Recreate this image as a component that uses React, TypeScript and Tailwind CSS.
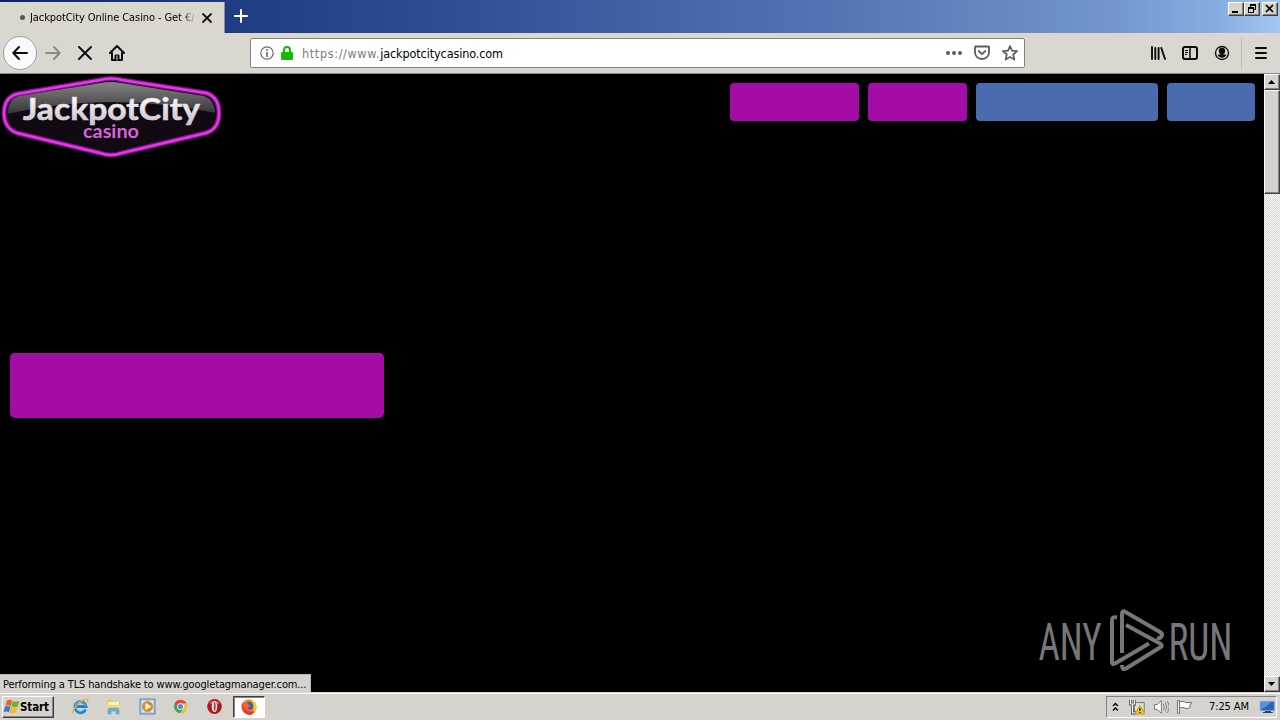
import type { ReactNode } from 'react';

const UI_FONT = "font-['DejaVu_Sans_Condensed','DejaVu_Sans',sans-serif] [font-stretch:condensed]";
const RAISED =
  'bg-[#d6d3ce] border border-t-white border-l-white border-r-[#404040] border-b-[#404040] shadow-[inset_-1px_-1px_0_#848284]';

function CaptionButton({ children, className = '' }: { children: ReactNode; className?: string }) {
  return (
    <button className={`flex h-[14px] w-4 items-center justify-center ${RAISED} ${className}`}>
      {children}
    </button>
  );
}

function TitleBar() {
  return (
    <header className="flex h-[33px] shrink-0 bg-[linear-gradient(90deg,#0a246a_0px,#1f3c82_225px,#2c4c93_430px,#5576b5_850px,#7094cb_1100px,#86ace0_1215px,#a3c8f2_1280px)]">
      <div className="mt-[2px] flex h-[31px] w-[225px] items-center border-r border-[#8a8f9b] bg-[#dad7d1] pl-[20px]">
        <span className="size-[5px] rounded-full bg-[#555555]" />
        <span className="ml-[5px] w-[164px] overflow-hidden text-[11px] leading-[16px] tracking-[-0.09px] whitespace-nowrap text-black [mask-image:linear-gradient(90deg,#000_150px,transparent_168px)]">
          JackpotCity Online Casino - Get €/
        </span>
        <svg className="ml-[7px]" width="12" height="12" viewBox="0 0 12 12" stroke="#111" strokeWidth="1.800" strokeLinecap="round">
          <path d="M2 2l8 8M10 2l-8 8" />
        </svg>
      </div>
      <svg className="mt-[8px] ml-[8px]" width="16" height="16" viewBox="0 0 16 16" stroke="#fff" strokeWidth="2" strokeLinecap="round">
        <path d="M8 2v12M2 8h12" />
      </svg>
      <div className="ml-auto flex pt-[2px] pr-[2px]">
        <CaptionButton>
          <svg width="12" height="10" viewBox="0 0 12 10"><path d="M2 7h6v2H2z" /></svg>
        </CaptionButton>
        <CaptionButton>
          <svg className="shrink-0" width="12" height="10" viewBox="0 0 12 10">
            <path fillRule="evenodd" d="M4 0h6v6H8V5h1V2H5v1H4zM2 3h6v6H2zM3 5v3h4V5z" />
          </svg>
        </CaptionButton>
        <CaptionButton className="ml-[2px]">
          <svg width="12" height="10" viewBox="0 0 12 10" stroke="#000" strokeWidth="1.600"><path d="M2 1l7 7M9 1L2 8" /></svg>
        </CaptionButton>
      </div>
    </header>
  );
}

function ToolBar() {
  return (
    <nav className="flex h-[41px] shrink-0 items-center border-b border-[#8f8c87] bg-[#dad7d1] pl-[3px]">
      <div className="flex size-[34px] items-center justify-center rounded-full border border-[#a09e9a] bg-[#fafafa]">
        <svg width="16" height="16" viewBox="0 0 16 16" fill="none" stroke="#0c0c0d" strokeWidth="2" strokeLinecap="round" strokeLinejoin="round">
          <path d="M15 8H1.500M7 2L1.300 8L7 14" />
        </svg>
      </div>
      <svg className="ml-[8px]" width="16" height="16" viewBox="0 0 16 16" fill="none" stroke="#8d8b88" strokeWidth="2" strokeLinecap="round" strokeLinejoin="round">
        <path d="M1 8h13.500M9 2l5.700 6L9 14" />
      </svg>
      <svg className="ml-[16px]" width="16" height="16" viewBox="0 0 16 16" stroke="#0c0c0d" strokeWidth="2" strokeLinecap="round">
        <path d="M2 2l12 12M14 2L2 14" />
      </svg>
      <svg className="ml-[16px]" width="16" height="16" viewBox="0 0 16 16" fill="none" stroke="#0c0c0d" strokeWidth="2" strokeLinecap="round" strokeLinejoin="round">
        <path d="M1 8l7-7 7 7M3 8v7h10V8" />
        <path d="M6 15v-5h4v5" fill="#0c0c0d" strokeWidth="1" />
        <path d="M8 11v4" stroke="#dad7d1" strokeWidth="1" />
      </svg>

      <div className="ml-[125px] flex h-[30px] w-[775px] items-center rounded-[2px] border border-[#85837f] bg-white pl-[9px]">
        <svg width="14" height="14" viewBox="0 0 14 14" fill="none" stroke="#6b6b6d" strokeWidth="1.200">
          <circle cx="7" cy="7" r="6.200" />
          <path d="M7 6v5M7 3v1.700" strokeWidth="1.700" />
        </svg>
        <svg className="ml-[7px]" width="12" height="14" viewBox="0 0 12 14">
          <path d="M3 7V4a3 3 0 0 1 6 0v3" fill="none" stroke="#12bc00" strokeWidth="2" />
          <rect y="6" width="12" height="8" rx="1" fill="#12bc00" />
        </svg>
        <span className="ml-[9px] pt-[2px] text-[12.500px] leading-[18px] whitespace-nowrap text-[#7d7d7d]">
          <span className="tracking-[0.65px]">https://www.</span>
          <span className="tracking-[-0.1px] text-black">jackpotcitycasino.com</span>
        </span>
        <div className="ml-auto flex items-center gap-[12px] pr-[6px]">
          <svg width="16" height="16" viewBox="0 0 16 16" fill="#5c5c5e"><circle cx="2" cy="8" r="2" /><circle cx="8" cy="8" r="2" /><circle cx="14" cy="8" r="2" /></svg>
          <svg width="16" height="16" viewBox="0 0 16 16" fill="none" stroke="#5c5c5e" strokeWidth="1.800" strokeLinecap="round" strokeLinejoin="round">
            <path d="M1.500 1.500h13q.500 0 .500.500V7.500a7 6.500 0 0 1-14 0V2q0-.500.500-.500zM4.700 6L8 9.100l3.300-3.100" />
          </svg>
          <svg width="16" height="16" viewBox="0 0 16 16" fill="none" stroke="#5c5c5e" strokeWidth="1.700" strokeLinejoin="round">
            <path d="M8 1l2 4.700 5.100.400-3.900 3.400 1.200 5.100L8 11.900l-4.400 2.700 1.200-5.100L.900 6.100 6 5.700z" />
          </svg>
        </div>
      </div>

      <div className="ml-auto flex h-full items-center">
        <svg width="16" height="16" viewBox="0 0 16 16" stroke="#0c0c0d" strokeWidth="1.900" strokeLinecap="round">
          <path d="M2 2v12M5.300 3v11M8.600 3v11M11.300 3L15 14" />
        </svg>
        <svg className="ml-[16px]" width="16" height="16" viewBox="0 0 16 16" fill="none" stroke="#0c0c0d" strokeWidth="2">
          <rect x="1" y="2" width="14" height="12" rx="2" />
          <path d="M8 2v12" strokeWidth="1.500" />
          <path d="M3 5.500h3M3 7.500h3M3 9.500h2" strokeWidth="1" />
        </svg>
        <svg className="ml-[16px]" width="16" height="16" viewBox="0 0 16 16" fill="none" stroke="#0c0c0d" strokeWidth="1.300">
          <circle cx="8" cy="8" r="6.500" />
          <circle cx="8" cy="6" r="2.500" fill="#0c0c0d" />
          <path d="M3.800 10Q8 8.500 12.200 10Q10.500 12.500 8 12.500T3.800 10z" fill="#0c0c0d" strokeWidth=".5" />
        </svg>
        <div className="ml-[11px] h-[32px] w-px bg-[#c0bdb8]" />
        <svg className="mr-[11px] ml-[11px]" width="16" height="16" viewBox="0 0 16 16" stroke="#0c0c0d" strokeWidth="2" strokeLinecap="round">
          <path d="M3 3h10M3 8h10M3 13h10" />
        </svg>
      </div>
    </nav>
  );
}

const RIM = 'M17 94L100 80Q111 77 122 80L206 93Q219 97 219 113T206 133L122 153Q111 157 100 153L17 133Q4 128 4 113T17 94z';

function CasinoLogo() {
  return (
    <svg className="shrink-0" width="224" height="86" viewBox="0 74 224 86">
      <defs>
        <linearGradient id="gloss" x1="0" y1="0" x2="0" y2="1">
          <stop offset="0" stopColor="#8a8a8a" />
          <stop offset="1" stopColor="#343434" />
        </linearGradient>
        <linearGradient id="silver" x1="0" y1="0" x2="0" y2="1">
          <stop offset="0.2" stopColor="#ffffff" />
          <stop offset="0.9" stopColor="#c9c3cd" />
        </linearGradient>
        <clipPath id="plate">
          <path d="M19 96L101 83Q111 81 121 83L204 96Q215 100 215 113T204 131L121 150Q111 153 101 150L19 131Q8 127 8 113T19 96z" />
        </clipPath>
      </defs>
      <path d={RIM} fill="#120a13" stroke="#7a1480" strokeWidth="5" />
      <g clipPath="url(#plate)">
        <path d="M7 114Q60 102 112 102T216 113V80H7z" fill="url(#gloss)" />
      </g>
      <path d={RIM} fill="none" stroke="#e636ea" strokeWidth="2.400" />
      <text x="23" y="119.500" textLength="177" lengthAdjust="spacingAndGlyphs" fill="url(#silver)" stroke="#dcd8df" strokeWidth=".6" className="font-['Lato',sans-serif] text-[31px] font-bold">JackpotCity</text>
      <text x="83" y="137.500" textLength="56" lengthAdjust="spacingAndGlyphs" fill="#dc62dc" className="font-['Lato',sans-serif] text-[18.500px] font-bold">casino</text>
    </svg>
  );
}

function Watermark() {
  return (
    <svg className="mr-[31px] mb-[17px]" width="196" height="68" viewBox="1037 607 196 68" fill="none">
      <g fill="#777777" className="font-['Roboto',sans-serif] text-[52px]">
        <text x="1038.500" y="660" textLength="63" lengthAdjust="spacingAndGlyphs">ANY</text>
        <text x="1168.500" y="660" textLength="64" lengthAdjust="spacingAndGlyphs">RUN</text>
      </g>
      <g stroke="#777777" strokeWidth="4" strokeLinejoin="round" strokeLinecap="butt">
        <path d="M1117 617.500q-5-1.500-5 3V662q0 3 3 1.500L1149 643.500" />
        <path d="M1122 653V614q0-4 3.500-2L1160 632q3 2 1.500 4.500t-4.500 1" />
        <path d="M1126 625L1160 643.500q3.500 2 0 4L1126 668.500q-4 2-4-3.500" />
      </g>
    </svg>
  );
}

function ScrollBar() {
  return (
    <div className="flex w-4 shrink-0 flex-col bg-white bg-[conic-gradient(#d6d3ce_25%,#fff_0_50%,#d6d3ce_0_75%,#fff_0)] bg-[length:2px_2px]">
      <button className={`flex h-4 items-center justify-center ${RAISED}`}>
        <svg width="8" height="4" viewBox="0 0 8 4"><path d="M0 4h7L3.500 0z" /></svg>
      </button>
      <div className={`h-[104px] ${RAISED}`} />
      <button className={`mt-auto flex h-4 items-center justify-center ${RAISED}`}>
        <svg width="8" height="4" viewBox="0 0 8 4"><path d="M0 0h7L3.500 4z" /></svg>
      </button>
    </div>
  );
}

function Page() {
  return (
    <div className="flex min-h-0 flex-1 bg-black">
      <main className="flex min-w-0 flex-1 flex-col">
        <div className="flex items-start">
          <CasinoLogo />
          <div className="mt-[9px] mr-[9px] ml-auto flex gap-[9px]">
            <div className="h-[38px] w-[129px] rounded-[4px] bg-[#a40ca8]" />
            <div className="h-[38px] w-[99px] rounded-[4px] bg-[#a40ca8]" />
            <div className="h-[38px] w-[182px] rounded-[4px] bg-[#4a6cae]" />
            <div className="h-[38px] w-[88px] rounded-[4px] bg-[#4a6cae]" />
          </div>
        </div>
        <div className="mt-[193px] ml-[10px] h-[65px] w-[374px] rounded-[5px] bg-[#a40ca8] shadow-[inset_0_1px_0_#9b1797]" />
        <div className="ml-[10px] h-[28px] w-[374px] bg-linear-to-b from-black to-[#050002]" />
        <div className="mt-auto flex items-end justify-between">
          <div className="h-[18px] w-[311px] border-t border-r border-[#b9b6b1] bg-[#d6d3ce] pt-px pl-[3px] text-[11px] leading-[18px] tracking-[-0.13px] whitespace-nowrap text-black">
            Performing a TLS handshake to www.googletagmanager.com...
          </div>
          <Watermark />
        </div>
      </main>
      <ScrollBar />
    </div>
  );
}

function WindowsFlag() {
  return (
    <svg className="shrink-0" width="17" height="16" viewBox="0 0 17 16">
      <path d="M4 1.500Q7 0 9.200 1.500L7.800 7Q5 5.500 2.300 7z" fill="#e8622a" />
      <path d="M9.800 2Q12.500 3.500 16.300 2L14.800 7.500Q11.500 9 8.300 7.500z" fill="#6fb52c" />
      <path d="M2 7.700Q4.700 6.300 7.500 7.800L6 13.300Q3.200 11.700.500 13.200z" fill="#3c78d0" />
      <path d="M8 8.200Q11 9.700 14.500 8.200L13 13.700Q9.500 15.200 6.500 13.700z" fill="#f5bd27" />
    </svg>
  );
}

function QuickLaunch() {
  return (
    <div className="ml-[18px] flex items-center">
      <svg width="17" height="17" viewBox="0 0 17 17" fill="none">
        <path d="M13.500 11.500A5.500 5.500 0 1 1 14 8.500H4.500" stroke="#2382ce" strokeWidth="3" />
        <path d="M12.500 11.300A5 5 0 1 1 13.500 8" stroke="#62bdf0" strokeWidth="1" />
        <path d="M1.500 15.500C-1 12 10-.500 15.500 1.500q1 1-.500 3" stroke="#e5b334" strokeWidth="1.300" />
      </svg>
      <svg className="ml-[16px]" width="17" height="17" viewBox="0 0 17 17">
        <path d="M2 2h5l1 2h7v10H2z" fill="#e9c55f" />
        <path d="M3 4h11v4H3z" fill="#fff3b4" />
        <path d="M2 7h13v7H2z" fill="#f4d77b" />
        <path d="M3 16v-4q0-2 2-2h7q2 0 2 2v4h-3v-3H6v3z" fill="#68b2e3" stroke="#4a8ebf" strokeWidth=".5" />
      </svg>
      <svg className="ml-[17px]" width="17" height="17" viewBox="0 0 17 17">
        <rect x="1" y="1" width="15" height="15" fill="#a9d0f0" stroke="#4d8bc6" />
        <rect x="3" y="3" width="11" height="11" fill="#e1effa" />
        <circle cx="8.500" cy="8.500" r="5.500" fill="#ee8517" />
        <path d="M6.500 5l6 3.500-6 3.500z" fill="#fff" />
      </svg>
      <svg className="ml-[17px]" width="15" height="15" viewBox="0 0 16 16">
        <circle cx="8" cy="8" r="7" fill="#44a853" />
        <path d="M2 4.300A7 7 0 0 1 14.200 4.700H8L5 9z" fill="#e4473a" />
        <path d="M8 4.700h6.200A7 7 0 0 1 8 15l3-5z" fill="#f6c628" />
        <circle cx="8" cy="8" r="3.500" fill="#fff" />
        <circle cx="8" cy="8" r="2.700" fill="#4688ee" />
      </svg>
      <svg className="ml-[18px]" width="17" height="17" viewBox="0 0 17 17">
        <ellipse cx="8.500" cy="8.500" rx="7.300" ry="7.500" fill="#b01a1f" />
        <path d="M3 5a6.500 5 0 0 1 11 0q-5 3-11 0" fill="#d85b59" />
        <ellipse cx="8.500" cy="8.500" rx="2.700" ry="5.500" fill="#f1eeec" />
        <ellipse cx="8.700" cy="8.500" rx="1" ry="4.500" fill="#a8484a" />
      </svg>
      <div className="ml-[10px] flex h-[22px] w-[32px] items-center justify-center border border-t-[#404040] border-r-white border-b-white border-l-[#404040] bg-white shadow-[inset_1px_1px_0_#848284]">
        <svg width="16" height="16" viewBox="0 0 16 16">
          <circle cx="8" cy="8" r="7.500" fill="#f47a22" />
          <path d="M9 0q6 2.500 6.500 8t-5 7.300Q15 9 9 0z" fill="#ffca2c" />
          <path d="M1 4Q-.500 11 5 14.700t9-3q-4 2-7 0T5 7z" fill="#ee3140" />
          <circle cx="8.300" cy="7" r="4" fill="#2f62c0" />
          <path d="M2 2.500Q3 4 5 4q2 0 3 2l2 1-3 1.200q-1 2 3 2.300-3 2.500-6 0T2 2.500z" fill="#f6642b" />
        </svg>
      </div>
    </div>
  );
}

function Tray() {
  return (
    <div className="mr-[3px] ml-auto flex h-[22px] w-[171px] items-center border border-t-[#848284] border-r-white border-b-white border-l-[#848284] pl-[5px]">
      <svg width="8" height="10" viewBox="0 0 8 10" fill="none" stroke="#000" strokeWidth="1.400">
        <path d="M1 4l2.500-2.500L6 4M1 8.500L3.500 6 6 8.500" />
      </svg>
      <svg className="ml-[9px]" width="17" height="16" viewBox="0 0 17 16" fill="none">
        <path d="M5.500 3.500h10v9h-10z" fill="#e1dfdb" stroke="#777" />
        <path d="M1.500 1v4h4V1M3.500 5v9h4" stroke="#666" strokeWidth="3" />
        <path d="M1.500 1v4h4V1M3.500 5v9h4" stroke="#fff" strokeWidth="1" />
        <path d="M11 6l5 9H6z" fill="#f4cd19" stroke="#b89300" strokeWidth=".8" />
        <path d="M11 9v3M11 13v1.200" stroke="#111" strokeWidth="1.300" />
      </svg>
      <svg className="ml-[7px]" width="17" height="16" viewBox="0 0 17 16" fill="none" stroke="#777">
        <path d="M1.500 5.500h3l4-4v13l-4-4h-3z" fill="#fff" />
        <path d="M10.500 5q2 3 0 6M12.500 3.500q3 4.500 0 9M14.500 2q4 6 0 12" strokeWidth=".9" />
      </svg>
      <svg className="ml-[7px]" width="17" height="16" viewBox="0 0 17 16" fill="#fff" stroke="#6e6e6e">
        <path d="M3.500 2.500q4-1 6.500 1h6l-2 3 .500 2q-3 2-6 .500-3-1-5 0z" />
        <path d="M1.500 1.500h2v13h-2z" />
      </svg>
      <span className="ml-[16px] w-[43px] pt-px text-[11px] leading-[16px] tracking-[-0.12px] whitespace-nowrap text-black">7:25 AM</span>
      <svg className="ml-[8px]" width="17" height="14" viewBox="0 0 17 14">
        <path d="M1 1h15v10H1z" fill="#2b65b4" stroke="#a8c5e9" />
        <path d="M2 2h10L7 7 2 9z" fill="#5595dc" />
        <path d="M6 11h6v1h2v1H4v-1h2z" fill="#233f70" />
      </svg>
    </div>
  );
}

function TaskBar() {
  return (
    <footer className="flex h-[28px] shrink-0 items-center border-t border-[#d6d3ce] bg-[#d6d3ce] pl-[2px] shadow-[inset_0_1px_0_#fff]">
      <button className={`mt-px flex h-[22px] w-[52px] items-center ${RAISED}`}>
        <WindowsFlag />
        <span className="text-[11.500px] leading-[16px] font-bold tracking-[-0.1px] text-black">Start</span>
      </button>
      <QuickLaunch />
      <Tray />
    </footer>
  );
}

export default function App() {
  return (
    <div className={`flex h-[720px] w-[1280px] flex-col overflow-hidden bg-black ${UI_FONT}`}>
      <TitleBar />
      <ToolBar />
      <Page />
      <TaskBar />
    </div>
  );
}
